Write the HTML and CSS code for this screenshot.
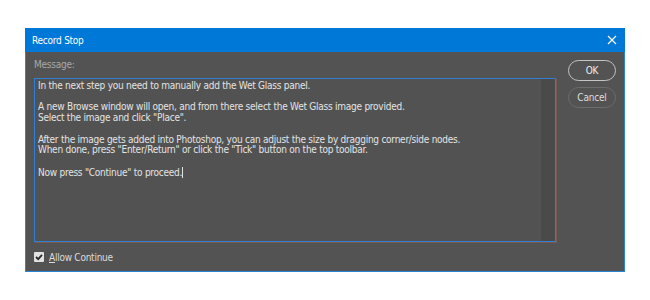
FILE: index.html
```html
<!DOCTYPE html>
<html lang="en">
<head>
    <meta charset="UTF-8">
    <title>Record Stop</title>
    <link rel="stylesheet" href="styles.css">
</head>
<body>
    <div class="dialog">
        <div class="titlebar">
            <span class="title">Record Stop</span>
            <svg class="close" width="10" height="10" viewBox="0 0 10 10">
                <path d="M1 1 L9 9 M9 1 L1 9" stroke="#ffffff" stroke-width="1.2" fill="none"/>
            </svg>
        </div>

        <div class="content">
            <div class="main">
                <div class="label">Message:</div>
                <div class="message">
                    <div class="message-text">In the next step you need to manually add the Wet Glass panel.

A new Browse window will open, and from there select the Wet Glass image provided.
Select the image and click "Place".

After the image gets added into Photoshop, you can adjust the size by dragging corner/side nodes.
When done, press "Enter/Return" or click the "Tick" button on the top toolbar.

Now press "Continue" to proceed.<span class="caret"></span></div>
                    <div class="track"></div>
                </div>
                <div class="check-row">
                    <span class="checkbox">
                        <svg width="10" height="10" viewBox="0 0 10 10">
                            <path d="M2 5 L4.2 7.2 L8 2.8" stroke="#2b2b2b" stroke-width="1.8" fill="none"/>
                        </svg>
                    </span>
                    <span class="check-label"><u>A</u>llow Continue</span>
                </div>
            </div>

            <div class="buttons">
                <button class="btn btn-default">OK</button>
                <button class="btn">Cancel</button>
            </div>
        </div>
    </div>
</body>
</html>
```

FILE: styles.css
```css
body {
    margin: 0;
    background-color: #ffffff;
    font-family: "DejaVu Sans Condensed", "DejaVu Sans", sans-serif;
    letter-spacing: -0.25px;
}
.dialog {
    width: 600px;
    margin: 28px 0 0 25px;
    background-color: #535353;
    border: 1px solid #2a84d8;
    border-top: none;
    box-sizing: border-box;
}
.titlebar {
    height: 24px;
    background-color: #0078d7;
    display: flex;
    align-items: center;
    justify-content: space-between;
    padding: 0 8px 0 7px;
    margin: 0 -1px;
    color: #ffffff;
    font-size: 10px;
}
.close {
    display: block;
}
.content {
    display: flex;
    gap: 12px;
    padding: 6px 7px 7px 8px;
}
.main {
    width: 522px;
}
.label {
    color: #a8a8a8;
    font-size: 10px;
    line-height: 13px;
    margin-bottom: 7px;
}
.message {
    height: 164px;
    box-sizing: border-box;
    border: 1px solid #2f7fd6;
    box-shadow: 1px 1px 0 #7a5a4e;
    background-color: #525252;
    display: flex;
}
.message-text {
    flex: 1;
    white-space: pre-wrap;
    color: #e4e4e4;
    font-size: 10px;
    line-height: 10.7px;
    padding: 2px 3px;
}
.caret {
    display: inline-block;
    width: 0;
    height: 11px;
    border-left: 1px solid #e4e4e4;
    vertical-align: -2px;
}
.track {
    width: 14px;
    background-color: #4a4a4a;
}
.check-row {
    display: flex;
    align-items: center;
    gap: 5px;
    margin-top: 8px;
    height: 14px;
    color: #dcdcdc;
    font-size: 10px;
}
.checkbox {
    width: 10px;
    height: 10px;
    background-color: #e2e2e2;
    border-radius: 1px;
    display: flex;
    align-items: center;
    justify-content: center;
}
.checkbox svg {
    display: block;
}
.buttons {
    display: flex;
    flex-direction: column;
    gap: 6px;
    padding-top: 2px;
}
.btn {
    width: 48px;
    height: 21px;
    padding: 0;
    background-color: #535353;
    border: 1.5px solid #6c6c6c;
    border-radius: 11px;
    color: #dedede;
    font-family: "DejaVu Sans Condensed", "DejaVu Sans", sans-serif;
    font-size: 10px;
    letter-spacing: -0.2px;
}
.btn-default {
    border-color: #c4c4c4;
    color: #f0f0f0;
}
```
